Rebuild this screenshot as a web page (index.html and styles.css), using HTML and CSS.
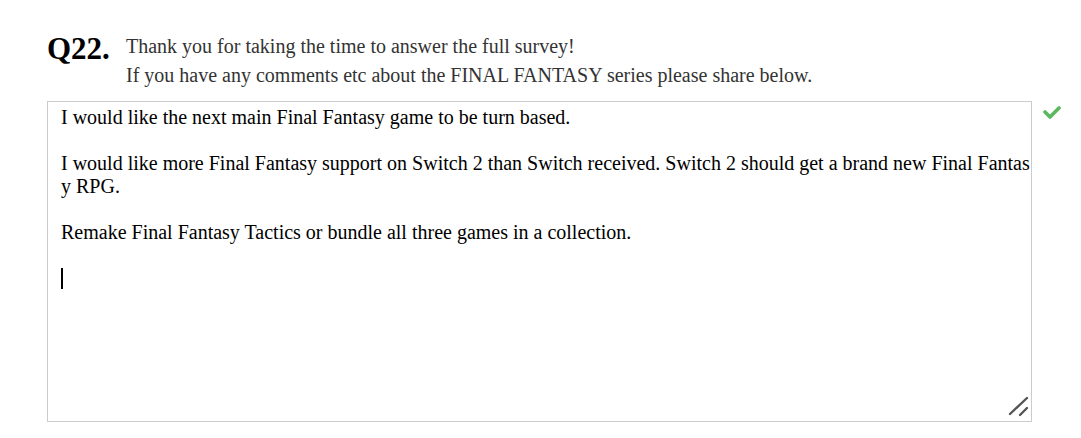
FILE: index.html
```html
<!DOCTYPE html>
<html lang="en">
<head>
    <meta charset="UTF-8">
    <title>Survey - Q22</title>
    <link rel="stylesheet" href="styles.css">
</head>
<body>
    <div class="question">
        <div class="q-head">
            <div class="q-num">Q22.</div>
            <div class="q-text">
                <div>Thank you for taking the time to answer the full survey!</div>
                <div>If you have any comments etc about the FINAL FANTASY series please share below.</div>
            </div>
        </div>
        <div class="answer-row">
            <div class="answer">
                <p>I would like the next main Final Fantasy game to be turn based.</p>
                <p>&nbsp;</p>
                <p>I would like more Final Fantasy support on Switch 2 than Switch received. Switch 2 should get a brand new Final Fantasy RPG.</p>
                <p>&nbsp;</p>
                <p>Remake Final Fantasy Tactics or bundle all three games in a collection.</p>
                <p>&nbsp;</p>
                <p><span class="caret"></span></p>
                <!-- resize grip -->
                <svg class="grip" width="24" height="24" viewBox="0 0 24 24">
                    <path d="M4 18 L21 2" stroke="#555" stroke-width="2.4" stroke-linecap="round"/>
                    <path d="M14 19 L21 12" stroke="#555" stroke-width="2.4" stroke-linecap="round"/>
                </svg>
            </div>
            <svg class="check" width="18" height="14" viewBox="0 0 18 14">
                <path d="M2 7 L7 12 L16 3" fill="none" stroke="#5cb85c" stroke-width="3.6" stroke-linecap="round" stroke-linejoin="round"/>
            </svg>
        </div>
    </div>
</body>
</html>
```

FILE: styles.css
```css
body {
    margin: 0;
    background-color: #fff;
    font-family: "Liberation Serif", "Times New Roman", serif;
}

.question {
    padding: 32px 0 0 47px;
}

.q-head {
    display: flex;
    align-items: flex-start;
}

.q-num {
    width: 79px;
    font-size: 31px;
    font-weight: bold;
    line-height: 30px;
    margin-top: 2px;
    color: #000;
}

.q-text {
    font-size: 20px;
    line-height: 29px;
    color: #333;
}

.answer-row {
    display: flex;
    align-items: flex-start;
    margin-top: 11px;
}

.answer {
    position: relative;
    box-sizing: border-box;
    width: 985px;
    height: 321px;
    border: 1px solid #ccc;
    padding: 4px 0 0 13px;
    font-size: 20px;
    line-height: 23px;
    color: #000;
    word-break: break-all;
}

.answer p {
    margin: 0 -3px 0 0;
}

.caret {
    display: inline-block;
    width: 2px;
    height: 21px;
    background-color: #000;
    vertical-align: -4px;
}

.grip {
    position: absolute;
    right: 1px;
    bottom: 1px;
}

.check {
    margin: 4px 0 0 11px;
}
```
